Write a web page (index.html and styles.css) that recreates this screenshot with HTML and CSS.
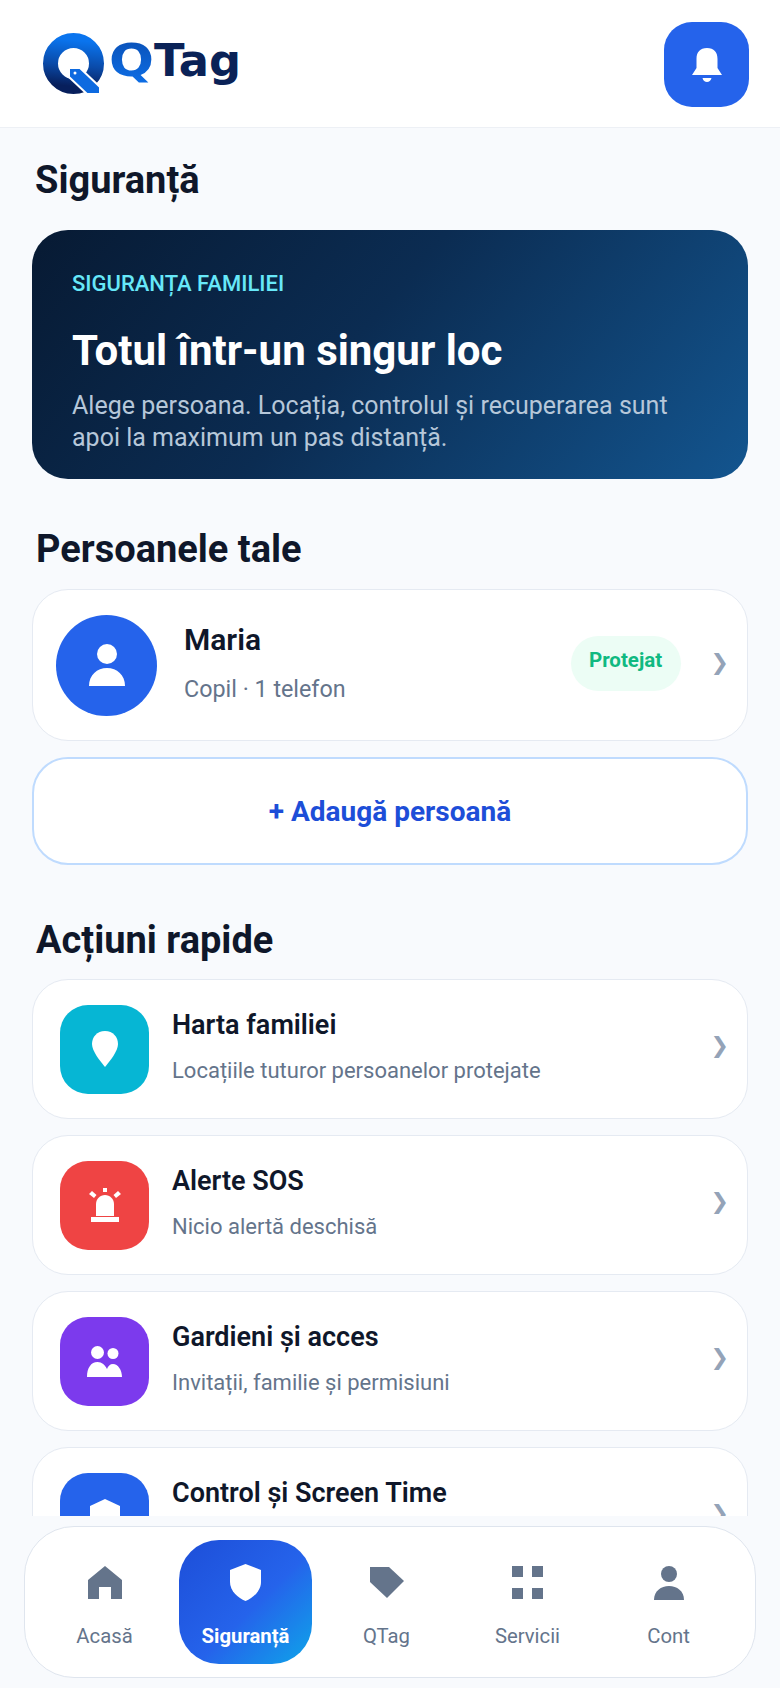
FILE: index.html
```html
<!DOCTYPE html>
<html lang="ro">
    <head>
        <meta charset="UTF-8">
        <title>QTag | Siguranță</title>
        <link rel="stylesheet" href="styles.css">
    </head>
    <body>
        <div class="app">
            <header class="topbar">
                <svg class="logo" viewBox="0 0 200 64" width="200" height="64" aria-label="QTag">
                    <defs>
                        <linearGradient id="ring-fill" x1="0.6" y1="0" x2="0.5" y2="1">
                            <stop offset="0" stop-color="#0a74ee"/>
                            <stop offset="0.55" stop-color="#0a4aa8"/>
                            <stop offset="1" stop-color="#071f5c"/>
                        </linearGradient>
                        <linearGradient id="q-fill" x1="0" y1="0" x2="0" y2="1">
                            <stop offset="0" stop-color="#0a4fb4"/>
                            <stop offset="1" stop-color="#0d6fe8"/>
                        </linearGradient>
                    </defs>
                    <circle cx="32.500" cy="31.500" r="23" fill="none" stroke="url(#ring-fill)" stroke-width="15"/>
                    <path d="M28 36 L39 36 L59 55 L59 62 L46 62 L28 45 Z" fill="#0d6ae0" stroke="#fff" stroke-width="2"/>
                    <circle cx="34" cy="41" r="1.500" fill="#fff"/>
                    <text class="logo-q" x="68" y="44" textLength="45" lengthAdjust="spacingAndGlyphs" fill="url(#q-fill)">Q</text>
                    <text class="logo-tag" x="113" y="44" textLength="87" lengthAdjust="spacingAndGlyphs" fill="#0a2257">Tag</text>
                </svg>
                <button class="bell-button" aria-label="Notificări">
                    <svg viewBox="0 0 30 34" width="30" height="34">
                        <path d="M15 0 C8 0 4.500 4 4.500 11 L4.500 20 L0 27 L30 27 L25.500 20 L25.500 11 C25.500 4 22 0 15 0 Z" fill="#fff"/>
                        <path d="M10.500 30 L19.500 30 C19 32.500 17 34 15 34 C13 34 11 32.500 10.500 30 Z" fill="#fff"/>
                    </svg>
                </button>
            </header>

            <main class="content">
                <h1 class="page-title">Siguranță</h1>

                <section class="hero">
                    <div class="hero-kicker">SIGURANȚA FAMILIEI</div>
                    <div class="hero-title">Totul într-un singur loc</div>
                    <div class="hero-text">Alege persoana. Locația, controlul și recuperarea sunt apoi la maximum un pas distanță.</div>
                </section>

                <h2 class="section-title">Persoanele tale</h2>

                <div class="card person-card">
                    <div class="avatar">
                        <svg viewBox="0 0 36 42" width="36" height="42">
                            <circle cx="18" cy="10" r="10" fill="#fff"/>
                            <path d="M0 42 C0 31 8 24 18 24 C28 24 36 31 36 42 Z" fill="#fff"/>
                        </svg>
                    </div>
                    <div class="card-body person-body">
                        <div class="person-name">Maria</div>
                        <div class="card-sub">Copil · 1 telefon</div>
                    </div>
                    <span class="status-pill">Protejat</span>
                    <span class="chevron">❯</span>
                </div>

                <button class="add-button">+ Adaugă persoană</button>

                <h2 class="section-title actions-title">Acțiuni rapide</h2>

                <div class="action-list">
                    <div class="card action-card">
                        <div class="action-icon icon-cyan">
                            <svg viewBox="0 0 26 36" width="26" height="36">
                                <path d="M13 0 C5 0 0 6 0 13 C0 20 8 30 13 36 C18 30 26 20 26 13 C26 6 21 0 13 0 Z" fill="#fff"/>
                            </svg>
                        </div>
                        <div class="card-body">
                            <div class="action-name">Harta familiei</div>
                            <div class="card-sub small">Locațiile tuturor persoanelor protejate</div>
                        </div>
                        <span class="chevron">❯</span>
                    </div>

                    <div class="card action-card">
                        <div class="action-icon icon-red">
                            <svg viewBox="0 0 32 34" width="32" height="34">
                                <path d="M7 28 L7 16 C7 11 11 7 16 7 C21 7 25 11 25 16 L25 28 Z" fill="#fff"/>
                                <rect x="2" y="29" width="28" height="5" fill="#fff"/>
                                <rect x="14" y="0" width="4" height="4" fill="#fff"/>
                                <path d="M0 6 L3 3 L7.500 7 L5 10 Z M32 6 L29 3 L24.500 7 L27 10 Z" fill="#fff"/>
                            </svg>
                        </div>
                        <div class="card-body">
                            <div class="action-name">Alerte SOS</div>
                            <div class="card-sub small">Nicio alertă deschisă</div>
                        </div>
                        <span class="chevron">❯</span>
                    </div>

                    <div class="card action-card">
                        <div class="action-icon icon-violet">
                            <svg viewBox="0 0 35 31" width="35" height="31">
                                <circle cx="10.500" cy="6.500" r="6.500" fill="#fff"/>
                                <circle cx="26" cy="7.500" r="5.500" fill="#fff"/>
                                <path d="M0 31 C0 22 4 16 10.500 16 C15 16 18 19 20 23 C21 20 23 18 26 18 C31 18 35 24 35 31 Z" fill="#fff"/>
                            </svg>
                        </div>
                        <div class="card-body">
                            <div class="action-name">Gardieni și acces</div>
                            <div class="card-sub small">Invitații, familie și permisiuni</div>
                        </div>
                        <span class="chevron">❯</span>
                    </div>

                    <div class="card action-card">
                        <div class="action-icon icon-blue">
                            <svg viewBox="0 0 30 36" width="30" height="36">
                                <path d="M15 0 L30 7 L30 18 C30 27 23 33 15 36 C7 33 0 27 0 18 L0 7 Z" fill="#fff"/>
                            </svg>
                        </div>
                        <div class="card-body">
                            <div class="action-name">Control și Screen Time</div>
                            <div class="card-sub small"></div>
                        </div>
                        <span class="chevron">❯</span>
                    </div>
                </div>
            </main>

            <nav class="bottom-nav">
                <a class="nav-item">
                    <span class="nav-icon">
                        <svg viewBox="0 0 34 33" width="34" height="33">
                            <path d="M17 0 L34 14 L34 33 L23 33 L23 21 L11 21 L11 33 L0 33 L0 14 Z" fill="#64748b"/>
                        </svg>
                    </span>
                    <span>Acasă</span>
                </a>
                <a class="nav-item active">
                    <span class="nav-icon">
                        <svg viewBox="0 0 31 37" width="31" height="37">
                            <path d="M15.500 0 L31 6 L31 18 C31 27 23 34 15.500 37 C8 34 0 27 0 18 L0 6 Z" fill="#fff"/>
                        </svg>
                    </span>
                    <span>Siguranță</span>
                </a>
                <a class="nav-item">
                    <span class="nav-icon">
                        <svg viewBox="0 0 34 31" width="34" height="31">
                            <path d="M0 0 L19 0 L34 14 L17 31 L0 15 Z" fill="#64748b"/>
                        </svg>
                    </span>
                    <span>QTag</span>
                </a>
                <a class="nav-item">
                    <span class="nav-icon">
                        <svg viewBox="0 0 31 33" width="31" height="33">
                            <rect x="0" y="0" width="11" height="11" fill="#64748b"/>
                            <rect x="20" y="0" width="11" height="11" fill="#64748b"/>
                            <rect x="0" y="22" width="11" height="11" fill="#64748b"/>
                            <rect x="20" y="22" width="11" height="11" fill="#64748b"/>
                        </svg>
                    </span>
                    <span>Servicii</span>
                </a>
                <a class="nav-item">
                    <span class="nav-icon">
                        <svg viewBox="0 0 30 34" width="30" height="34">
                            <circle cx="15" cy="8" r="8" fill="#64748b"/>
                            <path d="M0 34 C0 25 7 20 15 20 C23 20 30 25 30 34 Z" fill="#64748b"/>
                        </svg>
                    </span>
                    <span>Cont</span>
                </a>
            </nav>
        </div>
    </body>
</html>
```

FILE: styles.css
```css
* {
    box-sizing: border-box;
}

html,
body {
    height: 100%;
    overflow: hidden;
}

body {
    margin: 0;
    background-color: #f8fafd;
    font-family: Roboto, "Liberation Sans", sans-serif;
    color: #0f172a;
}

.app {
    height: 1688px;
    display: flex;
    flex-direction: column;
    overflow: hidden;
}

.topbar {
    flex: none;
    height: 128px;
    padding: 22px 31px 0 41px;
    display: flex;
    justify-content: space-between;
    align-items: flex-start;
    background-color: #fff;
    border-bottom: 1px solid #edf0f5;
}

.logo {
    margin-top: 10px;
}

.logo-q,
.logo-tag {
    font-family: "DejaVu Sans", sans-serif;
    font-weight: 700;
    font-size: 44px;
}

.bell-button {
    width: 85px;
    height: 85px;
    padding: 0;
    border: 0;
    border-radius: 28px;
    background-color: #2563eb;
    display: flex;
    align-items: center;
    justify-content: center;
}

.content {
    flex: 1;
    min-height: 0;
    overflow: hidden;
    padding: 0 32px;
}

.page-title {
    margin: 0;
    padding: 30px 3px 0;
    font-size: 38px;
    line-height: 44px;
    font-weight: 700;
}

.hero {
    margin-top: 28px;
    height: 249px;
    border-radius: 36px;
    padding: 41px 40px 0;
    background: linear-gradient(130deg, #071a33 0%, #0b2c52 45%, #13558f 100%);
}

.hero-kicker {
    font-size: 22px;
    line-height: 26px;
    font-weight: 500;
    color: #67e8f9;
}

.hero-title {
    margin-top: 29px;
    font-size: 42px;
    line-height: 50px;
    font-weight: 700;
    color: #fff;
}

.hero-text {
    margin-top: 14px;
    font-size: 25px;
    line-height: 32px;
    color: #b6c7d9;
}

.section-title {
    margin: 0;
    padding: 48px 4px 0;
    font-size: 38px;
    line-height: 44px;
    font-weight: 700;
}

.actions-title {
    padding-top: 53px;
}

.card {
    background-color: #fff;
    border: 1px solid #e5eaf2;
    border-radius: 36px;
    display: flex;
    align-items: center;
}

.card-body {
    flex: 1;
    min-width: 0;
    margin-bottom: 5px;
}

.person-card {
    margin-top: 18px;
    height: 152px;
    padding: 0 18px 0 23px;
}

.avatar {
    flex: none;
    width: 101px;
    height: 101px;
    border-radius: 50%;
    background-color: #2563eb;
    display: flex;
    align-items: center;
    justify-content: center;
}

.person-body {
    margin-left: 27px;
}

.person-name {
    font-size: 30px;
    line-height: 36px;
    font-weight: 600;
}

.card-sub {
    min-height: 30px;
    margin-top: 16px;
    font-size: 23.300px;
    line-height: 30px;
    color: #64748b;
}

.card-sub.small {
    margin-top: 14px;
    font-size: 22px;
}

.status-pill {
    flex: none;
    width: 110px;
    height: 55px;
    margin-right: 30px;
    margin-top: -4px;
    border-radius: 28px;
    background-color: #ecfdf5;
    color: #10b981;
    font-size: 20.500px;
    font-weight: 700;
    display: flex;
    align-items: center;
    justify-content: center;
    padding-bottom: 6px;
}

.chevron {
    flex: none;
    margin-bottom: 6px;
    font-family: "DejaVu Sans", sans-serif;
    font-size: 22px;
    color: #94a3b8;
}

.action-card .chevron {
    margin-bottom: 8px;
}

.add-button {
    display: block;
    width: 100%;
    height: 108px;
    margin-top: 16px;
    background-color: #fff;
    border: 2px solid #bfdbfe;
    border-radius: 36px;
    font-family: inherit;
    font-size: 28px;
    font-weight: 700;
    color: #1d4ed8;
}

.action-list {
    margin-top: 17px;
    display: flex;
    flex-direction: column;
    gap: 16px;
}

.action-card {
    flex: none;
    height: 140px;
    padding: 0 18px 0 27px;
}

.action-icon {
    flex: none;
    width: 89px;
    height: 89px;
    border-radius: 28px;
    display: flex;
    align-items: center;
    justify-content: center;
}

.icon-cyan {
    background-color: #06b6d4;
}

.icon-red {
    background-color: #ef4444;
}

.icon-violet {
    background-color: #7c3aed;
}

.icon-blue {
    background-color: #2563eb;
}

.action-icon + .card-body {
    margin-left: 23px;
}

.action-name {
    font-size: 27px;
    line-height: 34px;
    font-weight: 600;
}

.bottom-nav {
    flex: none;
    height: 152px;
    margin: 10px 24px;
    padding: 13px 0 13px 13px;
    background-color: #fff;
    border: 1px solid #dfe5ee;
    border-radius: 50px;
    display: grid;
    grid-template-columns: repeat(5, 133px);
    column-gap: 8px;
}

.nav-item {
    display: flex;
    flex-direction: column;
    align-items: center;
    gap: 22px;
    padding-top: 24px;
    border-radius: 40px;
    font-size: 20.300px;
    line-height: 26px;
    color: #64748b;
}

.nav-icon {
    height: 37px;
    display: flex;
    align-items: center;
}

.nav-item.active {
    background: linear-gradient(135deg, #1d4ed8 0%, #2563eb 55%, #0ea5e9 100%);
    color: #fff;
    font-weight: 700;
}
```
